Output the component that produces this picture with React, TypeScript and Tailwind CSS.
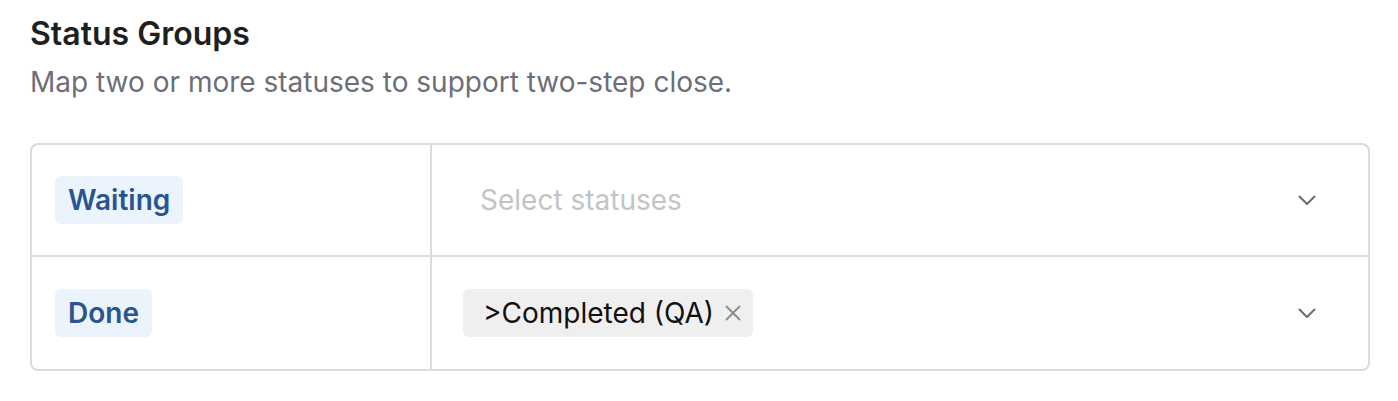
import React from "react";

function Chevron() {
  return (
    <svg width="24" height="24" viewBox="0 0 24 24" fill="none" className="text-[#6b6b75]">
      <path d="M4.5 8.5l7.5 7.5 7.5-7.5" stroke="currentColor" strokeWidth="2" strokeLinecap="round" strokeLinejoin="round" />
    </svg>
  );
}

export default function App() {
  return (
    <div className="w-[1398px] h-[401px] bg-white px-[30px] pt-[14px]" style={{ fontFamily: "Inter, 'Noto Sans', sans-serif" }}>
      <h2 className="text-[32px] leading-[40px] font-semibold text-[#1f1f1f]">Status Groups</h2>
      <p className="text-[28px] leading-[36px] text-[#6e6e78] mt-[10px]">Map two or more statuses to support two-step close.</p>
      <div className="mt-[43px] w-[1340px] border-2 border-[#dcdcdc] rounded-[8px] overflow-hidden">
        <div className="flex h-[112px] border-b-2 border-[#dcdcdc]">
          <div className="w-[400px] border-r-2 border-[#dcdcdc] flex items-center pl-[23px]">
            <span className="h-[48px] px-[13px] rounded-[6px] bg-[#ebf3fc] text-[#2a5490] text-[28px] font-semibold flex items-center">Waiting</span>
          </div>
          <div className="flex-1 flex items-center justify-between pl-[48px] pr-[49px]">
            <span className="text-[28px] text-[#c4c4c4]">Select statuses</span>
            <Chevron />
          </div>
        </div>
        <div className="flex h-[112px]">
          <div className="w-[400px] border-r-2 border-[#dcdcdc] flex items-center pl-[23px]">
            <span className="h-[48px] px-[13px] rounded-[6px] bg-[#ebf3fc] text-[#2a5490] text-[28px] font-semibold flex items-center">Done</span>
          </div>
          <div className="flex-1 flex items-center justify-between pl-[31px] pr-[49px]">
            <span className="h-[48px] pl-[20px] pr-[12px] rounded-[6px] bg-[#efefef] text-[#111] text-[28px] flex items-center gap-[11px]">
              &gt;Completed (QA)
              <svg width="16" height="16" viewBox="0 0 16 16" className="text-[#8a8a8a]">
                <path d="M1.5 1.5l13 13M14.5 1.5l-13 13" stroke="currentColor" strokeWidth="1.8" strokeLinecap="round" />
              </svg>
            </span>
            <Chevron />
          </div>
        </div>
      </div>
    </div>
  );
}
